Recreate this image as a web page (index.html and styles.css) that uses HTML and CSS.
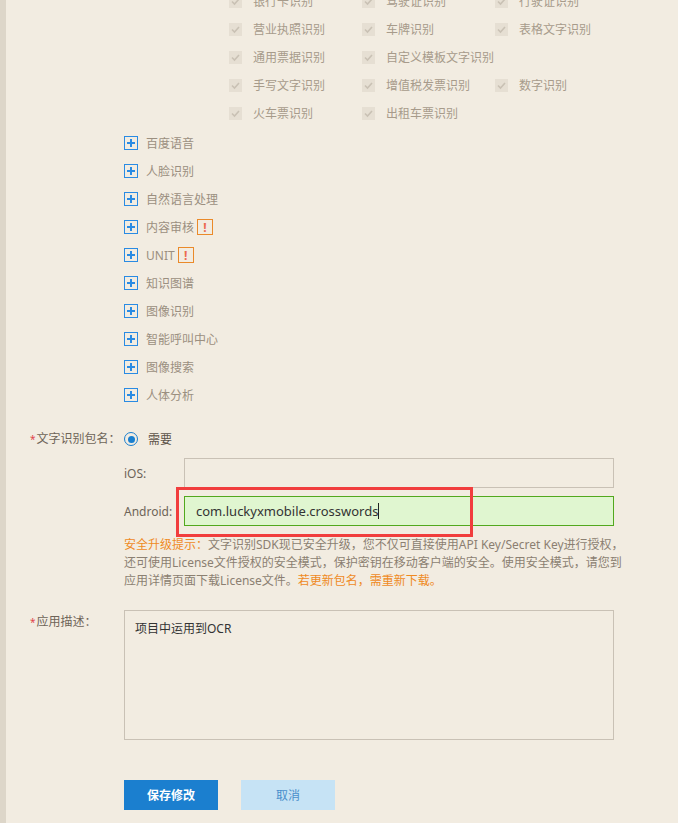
FILE: index.html
```html
<!DOCTYPE html>
<html lang="zh-CN">
<head>
    <meta charset="UTF-8">
    <title>编辑应用</title>
    <link rel="stylesheet" href="styles.css">
</head>
<body>
    <div class="page">
        <div class="ocr-options">
            <label class="check"><span class="box"><svg viewBox="0 0 13 13"><path d="M3 6.5l2.5 2.5 4.5-5" fill="none" stroke="#c9c1b4" stroke-width="1.6"/></svg></span>银行卡识别</label>
            <label class="check"><span class="box"><svg viewBox="0 0 13 13"><path d="M3 6.5l2.5 2.5 4.5-5" fill="none" stroke="#c9c1b4" stroke-width="1.6"/></svg></span>驾驶证识别</label>
            <label class="check"><span class="box"><svg viewBox="0 0 13 13"><path d="M3 6.5l2.5 2.5 4.5-5" fill="none" stroke="#c9c1b4" stroke-width="1.6"/></svg></span>行驶证识别</label>
            <label class="check"><span class="box"><svg viewBox="0 0 13 13"><path d="M3 6.5l2.5 2.5 4.5-5" fill="none" stroke="#c9c1b4" stroke-width="1.6"/></svg></span>营业执照识别</label>
            <label class="check"><span class="box"><svg viewBox="0 0 13 13"><path d="M3 6.5l2.5 2.5 4.5-5" fill="none" stroke="#c9c1b4" stroke-width="1.6"/></svg></span>车牌识别</label>
            <label class="check"><span class="box"><svg viewBox="0 0 13 13"><path d="M3 6.5l2.5 2.5 4.5-5" fill="none" stroke="#c9c1b4" stroke-width="1.6"/></svg></span>表格文字识别</label>
            <label class="check"><span class="box"><svg viewBox="0 0 13 13"><path d="M3 6.5l2.5 2.5 4.5-5" fill="none" stroke="#c9c1b4" stroke-width="1.6"/></svg></span>通用票据识别</label>
            <label class="check wide"><span class="box"><svg viewBox="0 0 13 13"><path d="M3 6.5l2.5 2.5 4.5-5" fill="none" stroke="#c9c1b4" stroke-width="1.6"/></svg></span>自定义模板文字识别</label>
            <label class="check"><span class="box"><svg viewBox="0 0 13 13"><path d="M3 6.5l2.5 2.5 4.5-5" fill="none" stroke="#c9c1b4" stroke-width="1.6"/></svg></span>手写文字识别</label>
            <label class="check"><span class="box"><svg viewBox="0 0 13 13"><path d="M3 6.5l2.5 2.5 4.5-5" fill="none" stroke="#c9c1b4" stroke-width="1.6"/></svg></span>增值税发票识别</label>
            <label class="check"><span class="box"><svg viewBox="0 0 13 13"><path d="M3 6.5l2.5 2.5 4.5-5" fill="none" stroke="#c9c1b4" stroke-width="1.6"/></svg></span>数字识别</label>
            <label class="check"><span class="box"><svg viewBox="0 0 13 13"><path d="M3 6.5l2.5 2.5 4.5-5" fill="none" stroke="#c9c1b4" stroke-width="1.6"/></svg></span>火车票识别</label>
            <label class="check"><span class="box"><svg viewBox="0 0 13 13"><path d="M3 6.5l2.5 2.5 4.5-5" fill="none" stroke="#c9c1b4" stroke-width="1.6"/></svg></span>出租车票识别</label>
        </div>

        <ul class="service-list">
            <li><span class="expand"></span>百度语音</li>
            <li><span class="expand"></span>人脸识别</li>
            <li><span class="expand"></span>自然语言处理</li>
            <li><span class="expand"></span>内容审核<span class="warn">!</span></li>
            <li><span class="expand"></span>UNIT<span class="warn">!</span></li>
            <li><span class="expand"></span>知识图谱</li>
            <li><span class="expand"></span>图像识别</li>
            <li><span class="expand"></span>智能呼叫中心</li>
            <li><span class="expand"></span>图像搜索</li>
            <li><span class="expand"></span>人体分析</li>
        </ul>

        <div class="form-row package-row">
            <div class="form-label"><span class="req">*</span>文字识别包名：</div>
            <div class="form-field">
                <label class="radio"><span class="dot"></span>需要</label>
                <div class="pkg-line">
                    <span class="pkg-label">iOS:</span>
                    <div class="input"></div>
                </div>
                <div class="pkg-line">
                    <span class="pkg-label">Android:</span>
                    <div class="input active">com.luckyxmobile.crosswords<span class="caret"></span><span class="highlight-box"></span></div>
                </div>
                <p class="hint"><span class="orange">安全升级提示：</span>文字识别SDK现已安全升级，您不仅可直接使用API Key/Secret Key进行授权，还可使用License文件授权的安全模式，保护密钥在移动客户端的安全。使用安全模式，请您到应用详情页面下载License文件。<span class="orange">若更新包名，需重新下载。</span></p>
            </div>
        </div>

        <div class="form-row desc-row">
            <div class="form-label"><span class="req">*</span>应用描述：</div>
            <div class="form-field">
                <div class="textarea">项目中运用到OCR</div>
            </div>
        </div>

        <div class="actions">
            <button class="btn btn-primary">保存修改</button>
            <button class="btn btn-light">取消</button>
        </div>
    </div>
</body>
</html>
```

FILE: styles.css
```css
* {
    margin: 0;
    padding: 0;
    box-sizing: border-box;
}

html, body {
    height: 100%;
}

body {
    background: #f2ece1;
    border-left: 6px solid #ddd6c9;
    font-family: "Noto Sans", "Noto Sans CJK SC", sans-serif;
    font-size: 12px;
    color: #6e6458;
    overflow: hidden;
}

/* disabled ocr sub options */
.ocr-options {
    display: grid;
    grid-template-columns: 133px 133px auto;
    padding-left: 223px;
    margin-top: -13px;
}

.check {
    height: 28px;
    display: flex;
    align-items: center;
    color: #a79b8b;
    white-space: nowrap;
}

.check .box {
    width: 13px;
    height: 13px;
    background: #e6dfd3;
    margin-right: 11px;
    display: flex;
}

.check .box svg {
    width: 13px;
    height: 13px;
}

.check.wide {
    grid-column: span 2;
}

/* service groups */
.service-list {
    list-style: none;
    padding-left: 118px;
    margin-top: 2px;
}

.service-list li {
    height: 28px;
    display: flex;
    align-items: center;
    color: #9b8f80;
}

.expand {
    width: 14px;
    height: 14px;
    border: 1.5px solid #2a8be3;
    margin-right: 8px;
    position: relative;
}

.expand::before,
.expand::after {
    content: "";
    position: absolute;
    background: #2a8be3;
}

.expand::before {
    left: 2px;
    right: 2px;
    top: 4.5px;
    height: 2px;
}

.expand::after {
    top: 2px;
    bottom: 2px;
    left: 4.5px;
    width: 2px;
}

.warn {
    width: 16px;
    height: 16px;
    border: 1px solid #ea8a2a;
    margin-left: 3px;
    color: #ec6a50;
    font-weight: bold;
    font-size: 12px;
    display: flex;
    align-items: center;
    justify-content: center;
}

/* form */
.form-row {
    display: flex;
}

.form-label {
    width: 118px;
    padding-left: 24px;
    color: #6e6458;
    line-height: 20px;
    white-space: nowrap;
}

.req {
    color: #e0464b;
    font-size: 10px;
    margin-right: 1px;
}

.form-field {
    flex: 1;
}

.package-row {
    margin-top: 20px;
}

.radio {
    display: flex;
    align-items: center;
    height: 20px;
    color: #5e544a;
}

.radio .dot {
    width: 14px;
    height: 14px;
    border: 1.5px solid #1a7fcf;
    border-radius: 50%;
    margin-right: 10px;
    display: flex;
    align-items: center;
    justify-content: center;
}

.radio .dot::after {
    content: "";
    width: 7px;
    height: 7px;
    border-radius: 50%;
    background: #1a7fcf;
}

.pkg-line {
    display: flex;
    align-items: center;
    margin-top: 9px;
}

.pkg-line + .pkg-line {
    margin-top: 8px;
}

.pkg-label {
    width: 60px;
    color: #6e6458;
}

.input {
    width: 430px;
    height: 30px;
    border: 1px solid #c9c1b5;
    background: #f2ece1;
    position: relative;
    display: flex;
    align-items: center;
    padding-left: 11px;
    font-size: 13px;
    color: #333;
}

.input.active {
    border-color: #52a81e;
    background: #e0f6d0;
}

.caret {
    width: 1px;
    height: 16px;
    background: #222;
}

.highlight-box {
    position: absolute;
    left: -9px;
    top: -10px;
    width: 297px;
    height: 50px;
    border: 3px solid #f13d3d;
}

.hint {
    width: 500px;
    margin-top: 10px;
    line-height: 18px;
    color: #8b7f71;
}

.orange {
    color: #ef8a1f;
}

.desc-row {
    margin-top: 20px;
}

.desc-row .form-label {
    line-height: 24px;
}

.textarea {
    width: 490px;
    height: 130px;
    border: 1px solid #c9c1b5;
    padding: 9px 10px;
    line-height: 18px;
    color: #333;
}

.actions {
    display: flex;
    gap: 23px;
    padding-left: 118px;
    margin-top: 40px;
}

.btn {
    width: 94px;
    height: 30px;
    border: none;
    font-family: "Noto Sans", "Noto Sans CJK SC", sans-serif;
    font-size: 12px;
}

.btn-primary {
    background: #1b7fcf;
    color: #fff;
    font-weight: bold;
}

.btn-light {
    background: #c6e3f5;
    color: #4a8fcb;
}
```
